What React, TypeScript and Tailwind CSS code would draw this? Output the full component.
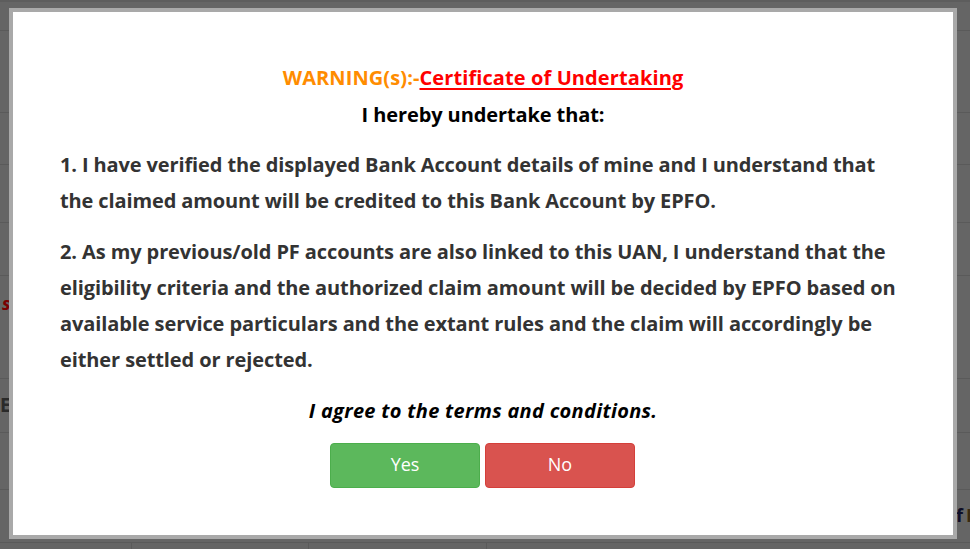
import React from "react";

const rows = [
  { h: 29, content: null },
  { h: 82, content: null },
  { h: 52, content: null },
  { h: 58, content: null },
  { h: 53, content: null },
  { h: 103, content: "s" },
  { h: 54, content: "E" },
  { h: 57, content: null },
  { h: 53, content: "f" },
  { h: 20, content: "last" },
];

export default function App() {
  return (
    <div
      className="relative w-[970px] h-[549px] overflow-hidden bg-[#656565]"
      style={{ fontFamily: "'Open Sans', 'Noto Sans', sans-serif" }}
    >
      {/* background table (dimmed by overlay) */}
      <div className="flex flex-col border-t-2 border-[#5d5d5d]">
        {rows.map((r, i) => (
          <div
            key={i}
            className="relative border-b border-[#5a5a5a] flex"
            style={{ height: r.h }}
          >
            {r.content === "s" && (
              <span className="absolute left-[2px] top-[18px] text-[18px] font-bold italic text-[#7a0000] leading-none">
                s
              </span>
            )}
            {r.content === "E" && (
              <span className="absolute left-0 top-[17px] text-[19px] font-bold text-[#2a2a2a] leading-none">
                E
              </span>
            )}
            {r.content === "f" && (
              <span className="absolute left-[956px] top-[16px] text-[18px] font-bold text-[#0d0d26] leading-none whitespace-nowrap">
                f<span className="ml-[3px] text-[#3a2a10]">I</span>
              </span>
            )}
            {r.content === "last" && (
              <div className="flex w-full">
                <div className="w-[132px] border-r border-[#5a5a5a]" />
                <div className="w-[177px] border-r border-[#5a5a5a]" />
                <div className="w-[178px] border-r border-[#5a5a5a]" />
                <div className="flex-1" />
              </div>
            )}
          </div>
        ))}
      </div>

      {/* modal */}
      <div className="absolute left-[9px] top-[8px] w-[948px] h-[531px] border-4 border-[#a9a9a9] bg-white">
        <div className="pt-[47px] px-[47px] text-[20px] font-bold">
          <div className="text-center leading-[38px] tracking-[0.1px]">
            <span className="text-[#ff8c00]">WARNING(s):-</span>
            <span className="text-[#ff0000] underline underline-offset-[3px]">
              Certificate of Undertaking
            </span>
          </div>
          <div className="text-center leading-[36px] text-black tracking-[-0.1px]">
            I hereby undertake that:
          </div>
          <p className="mt-[14px] leading-[36px] text-[#333333] tracking-[-0.12px]">
            1. I have verified the displayed Bank Account details of mine and I
            understand that the claimed amount will be credited to this Bank
            Account by EPFO.
          </p>
          <p className="mt-[15px] leading-[36px] text-[#333333] tracking-[-0.1px]">
            2. As my previous/old PF accounts are also linked to this UAN, I
            understand that the eligibility criteria and the authorized claim
            amount will be decided by EPFO based on available service
            particulars and the extant rules and the claim will accordingly be
            either settled or rejected.
          </p>
          <div className="mt-[15px] text-center italic leading-[36px] text-black tracking-[0.3px]">
            I agree to the terms and conditions.
          </div>
          <div className="mt-[14px] flex justify-center gap-[5px] pr-px">
            <button className="w-[150px] h-[45px] rounded-[4px] border border-[#4cae4c] bg-[#5cb85c] text-white text-[18px] font-normal leading-none pb-[3px]">
              Yes
            </button>
            <button className="w-[150px] h-[45px] rounded-[4px] border border-[#d43f3a] bg-[#d9534f] text-white text-[18px] font-normal leading-none pb-[3px]">
              No
            </button>
          </div>
        </div>
      </div>
    </div>
  );
}
